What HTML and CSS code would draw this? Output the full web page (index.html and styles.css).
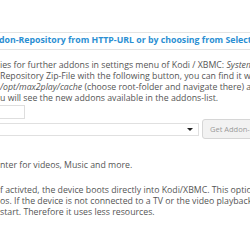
FILE: index.html
```html
<!DOCTYPE html>
<html lang="en">
<head>
  <meta charset="UTF-8" />
  <meta name="viewport" content="width=device-width, initial-scale=1.0" />
  <title>Kodi / XBMC Settings</title>
  <link rel="stylesheet" href="styles.css">
</head>
<body>
  <div class="page">
    <h3 class="section-title">don-Repository from HTTP-URL or by choosing from Selection</h3>

    <p class="desc">
      ies for further addons in settings menu of Kodi / XBMC: <i>System - Settings - Addons</i><br>
      Repository Zip-File with the following button, you can find it within<br>
      <i>/opt/max2play/cache</i> (choose root-folder and navigate there) and install<br>
      u will see the new addons available in the addons-list.
    </p>

    <div class="url-row">
      <input type="text" class="url-input" />
    </div>

    <div class="select-row">
      <div class="fake-select"><span class="arrow"></span></div>
      <button class="btn">Get Addon-Repository</button>
    </div>

    <p class="desc info">nter for videos, Music and more.</p>

    <p class="desc autostart">
      f activted, the device boots directly into Kodi/XBMC. This option is only<br>
      os. If the device is not connected to a TV or the video playback is<br>
      start. Therefore it uses less resources.
    </p>
  </div>
</body>
</html>
```

FILE: styles.css
```css
* {
  margin: 0;
  padding: 0;
  box-sizing: border-box;
}
html, body {
  width: 250px;
  height: 250px;
  overflow: hidden;
  background: #fff;
}
body {
  font-family: "Open Sans", "Liberation Sans", sans-serif;
  font-size: 8.75px;
  color: #555;
}
.page {
  padding-top: 32px;
  white-space: nowrap;
}
.section-title {
  border-top: 1px solid #e3e3e3;
  border-bottom: 1px solid #e3e3e3;
  height: 18px;
  line-height: 15px;
  font-size: 8.75px;
  font-weight: bold;
  color: #2b8fd3;
  margin-left: -1px;
}
.desc {
  line-height: 11px;
  margin-top: 10px;
}
.url-row {
  margin-top: 1px;
}
.url-input {
  display: block;
  width: 27px;
  height: 14px;
  margin-left: -2px;
  border: 1px solid #dedede;
  background: #fff;
}
.select-row {
  display: flex;
  align-items: center;
  gap: 3px;
}
.fake-select {
  position: relative;
  flex-shrink: 0;
  width: 199px;
  height: 13px;
  border: 1px solid #e0e0e0;
  border-left: none;
  background: #fff;
}
.arrow {
  position: absolute;
  right: 5px;
  top: 4px;
  border-left: 3px solid transparent;
  border-right: 3px solid transparent;
  border-top: 3px solid #222;
}
.btn {
  flex-shrink: 0;
  height: 20px;
  padding: 0 7px;
  border: 1px solid #d6d6d6;
  border-radius: 3px;
  background: #f2f2f2;
  color: #9a9a9a;
  font-family: inherit;
  font-size: 7.5px;
  white-space: nowrap;
}
.info {
  margin-top: 21px;
}
.autostart {
  margin-top: 14px;
}
```
